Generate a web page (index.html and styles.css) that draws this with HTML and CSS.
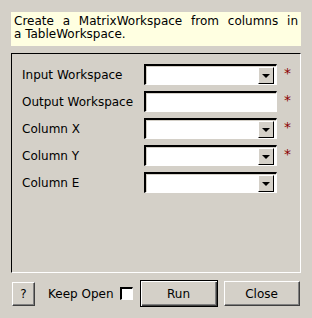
FILE: index.html
```html
<!DOCTYPE html>
<html lang="en">
<head>
    <meta charset="UTF-8">
    <title>CreateWorkspace Dialog</title>
    <link rel="stylesheet" href="styles.css">
</head>
<body>
    <div class="dialog">
        <div class="description">
            <span class="line">Create a MatrixWorkspace from columns in</span>
            <span>a TableWorkspace.</span>
        </div>

        <div class="frame">
            <div class="row">
                <span class="label">Input Workspace</span>
                <div class="field combo"><span class="drop"><span class="arrow"></span></span></div>
                <span class="req">*</span>
            </div>
            <div class="row">
                <span class="label">Output Workspace</span>
                <div class="field"></div>
                <span class="req">*</span>
            </div>
            <div class="row">
                <span class="label">Column X</span>
                <div class="field combo"><span class="drop"><span class="arrow"></span></span></div>
                <span class="req">*</span>
            </div>
            <div class="row">
                <span class="label">Column Y</span>
                <div class="field combo"><span class="drop"><span class="arrow"></span></span></div>
                <span class="req">*</span>
            </div>
            <div class="row">
                <span class="label">Column E</span>
                <div class="field combo"><span class="drop"><span class="arrow"></span></span></div>
            </div>
        </div>

        <div class="actions">
            <button class="btn btn-help">?</button>
            <label class="keep-open">Keep Open <span class="check"></span></label>
            <button class="btn btn-run">Run</button>
            <button class="btn btn-close">Close</button>
        </div>
    </div>
</body>
</html>
```

FILE: styles.css
```css
/* Global */
body {
    margin: 0;
    background: #d4d0c8;
    font-family: "DejaVu Sans", sans-serif;
    font-size: 12px;
    color: #000;
}

.dialog {
    width: 312px;
    height: 318px;
    box-sizing: border-box;
    padding: 12px 11px 0 11px;
    display: flex;
    flex-direction: column;
}

.description {
    height: 34px;
    box-sizing: border-box;
    background: #ffffe1;
    padding: 3px 3px 0 3px;
    line-height: 13px;
    margin-bottom: 7px;
}

.description .line {
    display: block;
    text-align: justify;
    text-align-last: justify;
}

/* Sunken group frame */
.frame {
    width: 290px;
    height: 220px;
    box-sizing: border-box;
    border-top: 1px solid #000;
    border-left: 1px solid #000;
    border-right: 1px solid #fff;
    border-bottom: 1px solid #fff;
    padding: 10px 0 0 10px;
    display: flex;
    flex-direction: column;
    gap: 6px;
}

.row {
    display: flex;
    align-items: center;
    height: 21px;
}

.label {
    width: 122px;
}

.field {
    width: 133px;
    height: 21px;
    box-sizing: border-box;
    background: #fff;
    border-top: 2px solid #000;
    border-left: 2px solid #000;
    border-right: 1px solid #fff;
    border-bottom: 1px solid #fff;
    box-shadow: 1px 1px 0 #d4d0c8 inset;
    display: flex;
    justify-content: flex-end;
}

.drop {
    width: 16px;
    height: 17px;
    margin: 1px 2px 0 0;
    box-sizing: border-box;
    background: #d4d0c8;
    border-top: 1px solid #fff;
    border-left: 1px solid #fff;
    border-right: 1px solid #000;
    border-bottom: 1px solid #000;
    display: flex;
    align-items: center;
    justify-content: center;
}

.arrow {
    width: 0;
    height: 0;
    border-left: 4px solid transparent;
    border-right: 4px solid transparent;
    border-top: 4px solid #000;
    margin-top: 1px;
}

.req {
    color: #8b0000;
    font-size: 14px;
    margin-left: 7px;
    margin-top: -3px;
}

/* Bottom buttons */
.actions {
    display: flex;
    align-items: center;
    margin-top: 7px;
    height: 27px;
}

.btn {
    font-family: "DejaVu Sans", sans-serif;
    font-size: 12px;
    color: #000;
    background: #d4d0c8;
    border-top: 1px solid #fff;
    border-left: 1px solid #fff;
    border-right: 1px solid #404040;
    border-bottom: 1px solid #404040;
    box-shadow: -1px -1px 0 #808080 inset;
    padding: 0;
    height: 25px;
}

.btn-help {
    width: 23px;
    height: 24px;
    margin-left: 1px;
}

.keep-open {
    display: flex;
    align-items: center;
    gap: 6px;
    margin-left: 13px;
}

.check {
    width: 13px;
    height: 13px;
    box-sizing: border-box;
    background: #fff;
    border-top: 2px solid #000;
    border-left: 2px solid #000;
    border-right: 1px solid #fff;
    border-bottom: 1px solid #fff;
}

.btn-run {
    width: 78px;
    height: 27px;
    margin-left: 7px;
    border: 1px solid #000;
    box-shadow: 1px 1px 0 #fff inset, -1px -1px 0 #404040 inset, -2px -2px 0 #808080 inset;
}

.btn-close {
    width: 76px;
    margin-left: 6px;
}
```
